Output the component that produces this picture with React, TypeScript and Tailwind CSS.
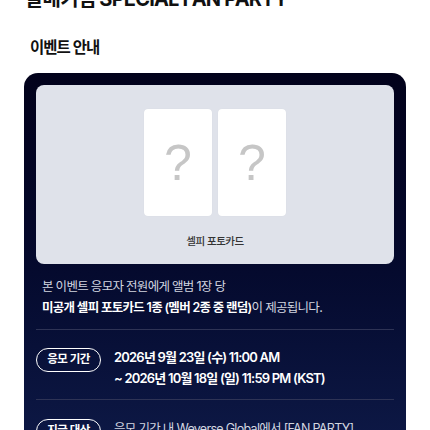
export default function App() {
  const font = { fontFamily: 'Inter, "Noto Sans CJK KR", "Noto Sans", sans-serif' };
  return (
    <div className="w-[430px] h-[430px] overflow-hidden bg-white" style={font}>
      <h1 className="-mt-[13px] pl-[25px] text-[20px] leading-[24px] font-bold text-[#111] tracking-[-0.8px]">
        발매기념 SPECIAL FAN PARTY
      </h1>
      <h2 className="mt-[26px] pl-[30px] text-[15.5px] leading-[22px] font-semibold text-[#111] tracking-[-1px]">이벤트 안내</h2>
      <div className="mx-[24px] mt-[14px] rounded-[14px] bg-gradient-to-b from-[#02021b] via-[#050a2e] to-[#0f1b4a] px-[12px] pt-[12px] pb-[20px] h-[400px]">
        <div className="rounded-[8px] bg-[#dfe2ea] pt-[24px] pb-[14px] flex flex-col items-center">
          <div className="flex gap-[6px]">
            {[0, 1].map((i) => (
              <div key={i} className="w-[68px] h-[107px] rounded-[4px] bg-white flex items-center justify-center shadow-[0_0_1px_rgba(0,0,0,0.08)]">
                <span className="text-[50px] leading-none text-[#c6c6c6]" style={{ fontFamily: '"Liberation Sans", Arial, sans-serif' }}>?</span>
              </div>
            ))}
          </div>
          <div className="mt-[18px] text-[10.5px] leading-[16px] font-medium text-[#333] tracking-[-0.5px]">셀피 포토카드</div>
        </div>
        <div className="px-[6px] pt-[12px] pb-[11px] text-[12.5px] leading-[21px] text-[#d3d6e0] tracking-[-0.7px]">
          <p>본 이벤트 응모자 전원에게 앨범 1장 당</p>
          <p>
            <span className="font-semibold text-white">미공개 셀피 포토카드 1종 (멤버 2종 중 랜덤)</span>이 제공됩니다.
          </p>
        </div>
        <div className="border-t border-[#2e3355]" />
        <div className="flex gap-[13px] pt-[17px] pb-[10px]">
          <span className="shrink-0 w-[65px] h-[24px] rounded-full border-[1.5px] border-white text-white text-[11.5px] font-semibold tracking-[-0.5px] flex items-center justify-center mt-[1px]">
            응모 기간
          </span>
          <div className="text-[13px] leading-[21px] font-semibold text-white tracking-[-0.8px]">
            <p>2026년 9월 23일 (수) 11:00 AM</p>
            <p>~ 2026년 10월 18일 (일) 11:59 PM (KST)</p>
          </div>
        </div>
        <div className="border-t border-[#2e3355]" />
        <div className="flex gap-[13px] pt-[18px]">
          <span className="shrink-0 w-[65px] h-[24px] rounded-full border-[1.5px] border-white text-white text-[11.5px] font-semibold tracking-[-0.5px] flex items-center justify-center mt-[1px]">
            지급 대상
          </span>
          <div className="text-[12.5px] leading-[21px] text-[#d3d6e0] tracking-[-0.7px]">
            <p>응모 기간 내 Weverse Global에서 [FAN PARTY]</p>
          </div>
        </div>
      </div>
    </div>
  );
}
